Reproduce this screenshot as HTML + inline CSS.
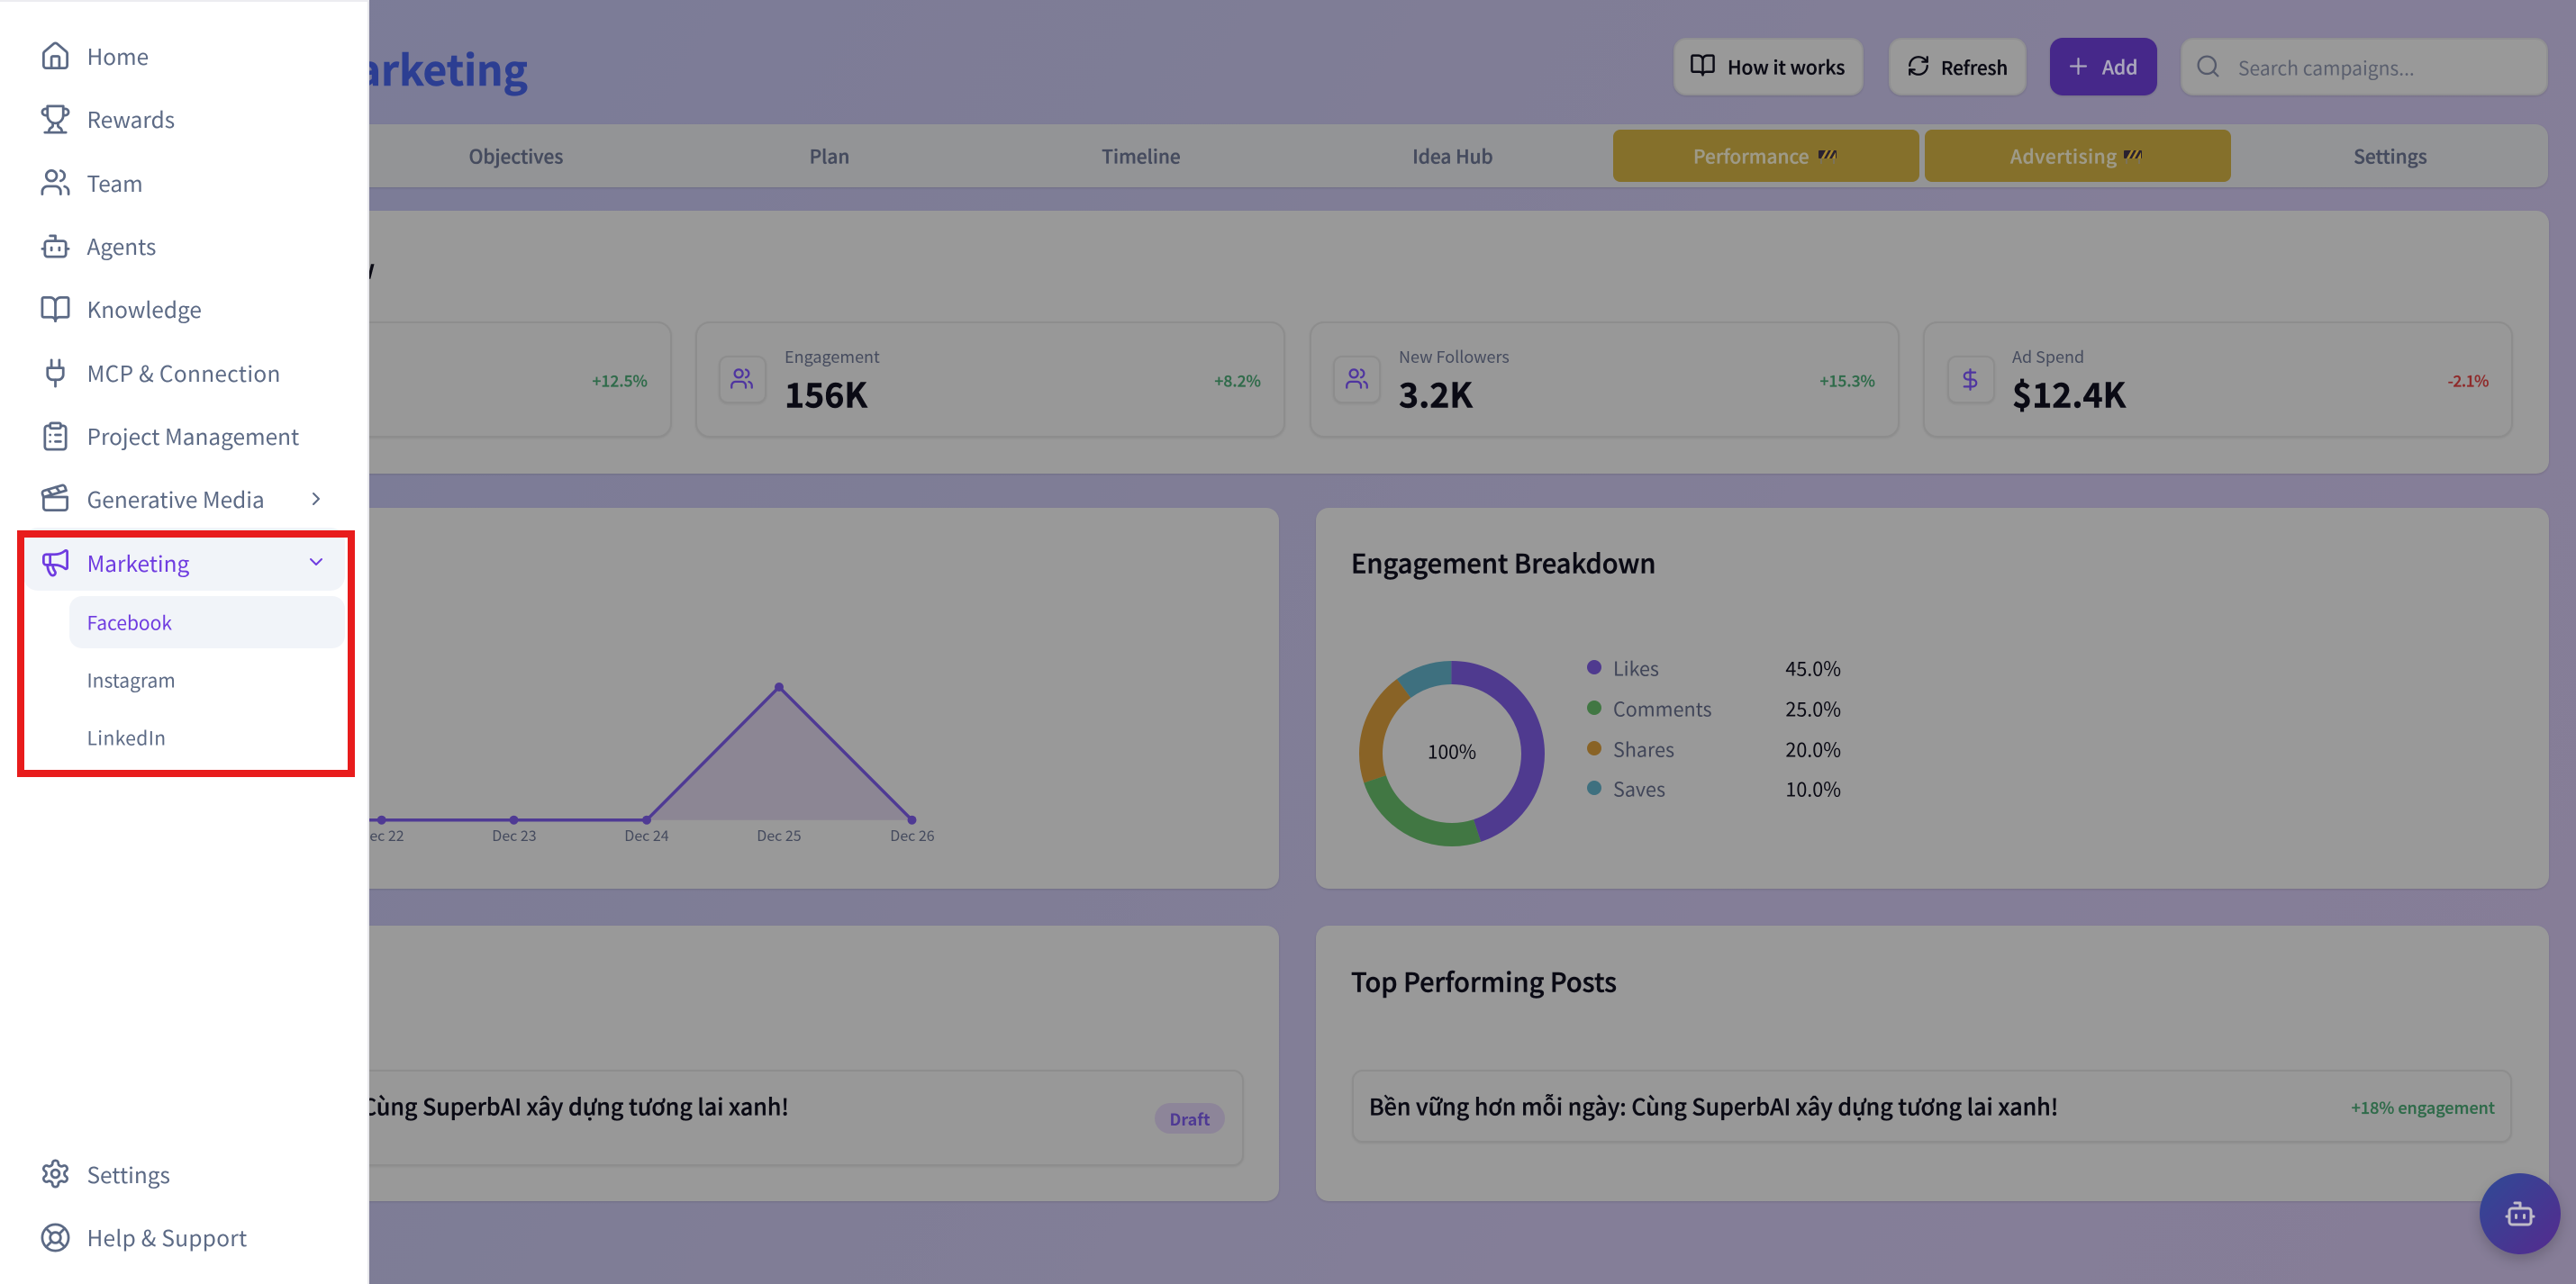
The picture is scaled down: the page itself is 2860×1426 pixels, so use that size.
<!DOCTYPE html>
<html><head><meta charset="utf-8"><style>
*{box-sizing:border-box;margin:0;padding:0}
html,body{width:2860px;height:1426px;overflow:hidden;background:#807d96}
body{position:relative;font-family:"Noto Sans CJK JP","Liberation Sans",sans-serif}
.bg{position:absolute;inset:0;background:linear-gradient(120deg,#7a7b98 0%,#7f7d96 40%,#847e98 70%,#867d97 100%)}
.b{position:absolute;background:#999;border-radius:14px;box-shadow:0 1px 2px rgba(0,0,0,.12)}
.s{position:absolute;background:#989898;border:2px solid #8d8d8d;border-radius:16px;box-shadow:0 1px 2px rgba(0,0,0,.08)}
.t{position:absolute;white-space:nowrap;line-height:1;transform:translateY(-50%)}
.c{transform:translate(-50%,-50%)}
.n{font-size:24.4px;color:#5c6a85;left:96.500px;margin-top:-.5px}
.sub{font-size:21px}
.tab{font-size:20.900px;font-weight:500;color:#454b5e;-webkit-text-stroke:.35px currentColor}
.l{font-size:18px;color:#454b5e;margin-top:-1px}
.v{font-size:37.500px;font-weight:700;color:#0a0a14;left:871px;margin-top:-1px;-webkit-text-stroke:.4px currentColor}
.g{font-size:17.500px;font-weight:500;color:#2f6b4a;-webkit-text-stroke:.25px currentColor}
.x{font-size:16px;color:#454b5e;margin-top:-1.500px}
.lg{font-size:21.500px;color:#404558;left:1791px}
.lv{font-size:21.500px;color:#0a0a14;right:816px}
.d{position:absolute;width:16px;height:16px;border-radius:50%;left:1762px}
.btn{font-size:21px;font-weight:500;-webkit-text-stroke:.3px currentColor}
.h{font-size:29px;font-weight:500;color:#0a0a14;left:1500px;-webkit-text-stroke:.4px currentColor}
.r{font-size:25px;font-weight:500;color:#0a0a14;-webkit-text-stroke:.3px currentColor}
svg{position:absolute;fill:none;stroke-linecap:round;stroke-linejoin:round}
.i{width:35px;height:35px;left:43.5px;stroke:#5c6a85;stroke-width:1.9;margin-top:-1px}
</style></head><body>
<div class="bg"></div>

<div class="t" style="right:2274px;top:76px;font-size:46px;font-weight:700;color:#2c3e92;-webkit-text-stroke:.5px currentColor">Marketing</div>

<div class="b" style="left:1858px;top:42px;width:211px;height:64px;border:2px solid #909092"></div>
<svg viewBox="0 0 24 24" style="left:1876px;top:58px;width:29px;height:29px;stroke:#0a0a14;stroke-width:2"><path d="M12 7v14"/><path d="M3 18a1 1 0 0 1-1-1V4a1 1 0 0 1 1-1h5a4 4 0 0 1 4 4 4 4 0 0 1 4-4h5a1 1 0 0 1 1 1v13a1 1 0 0 1-1 1h-6a3 3 0 0 0-3 3 3 3 0 0 0-3-3z"/></svg>
<div class="t btn" style="left:1918px;top:75px;color:#0a0a14">How it works</div>
<div class="b" style="left:2097px;top:42px;width:153px;height:64px;border:2px solid #909092"></div>
<svg viewBox="0 0 24 24" style="left:2117px;top:60px;width:26px;height:26px;stroke:#0a0a14;stroke-width:2.100"><path d="M3 12a9 9 0 0 1 9-9 9.750 9.750 0 0 1 6.740 2.740L21 8"/><path d="M21 3v5h-5"/><path d="M21 12a9 9 0 0 1-9 9 9.750 9.750 0 0 1-6.740-2.740L3 16"/><path d="M8 16H3v5"/></svg>
<div class="t btn" style="left:2155px;top:74px;font-size:20.500px;color:#0a0a14">Refresh</div>
<div class="b" style="left:2276px;top:42px;width:119px;height:64px;background:#46288a"></div>
<svg viewBox="0 0 24 24" style="left:2293px;top:59px;width:29px;height:29px;stroke:#aaa6bc;stroke-width:1.800"><path d="M5 12h14"/><path d="M12 5v14"/></svg>
<div class="t btn" style="left:2334px;top:75px;color:#aaa6bc">Add</div>
<div class="b" style="left:2421px;top:42px;width:408px;height:64px;border:2px solid #909092"></div>
<svg viewBox="0 0 24 24" style="left:2437px;top:59px;width:29px;height:29px;stroke:#555a6b;stroke-width:1.900"><circle cx="11" cy="11" r="8"/><path d="m21 21-4.300-4.300"/></svg>
<div class="t" style="left:2485px;top:76px;font-size:21px;color:#5a5f6e">Search campaigns...</div>

<div class="b" style="left:300px;top:138px;width:2529px;height:70px;background:#939496"></div>
<div class="t c tab" style="left:573px;top:174px">Objectives</div>
<div class="t c tab" style="left:921px;top:174px">Plan</div>
<div class="t c tab" style="left:1267px;top:174px">Timeline</div>
<div class="t c tab" style="left:1613px;top:174px">Idea Hub</div>
<div style="position:absolute;left:1791px;top:144px;width:340px;height:58px;background:#85702b;border-radius:8px"></div>
<div style="position:absolute;left:2137px;top:144px;width:340px;height:58px;background:#85702b;border-radius:8px"></div>
<div class="t tab" style="left:1880px;top:174px;color:#9e9a88">Performance</div>
<svg viewBox="0 0 20 16" style="left:2019px;top:166px;width:20px;height:16px"><path d="M3 10v6M17 10v6" stroke="#7a7468" stroke-width="1.500"/><rect x="0" y="1" width="20" height="9" rx="1" fill="#2a2230" stroke="none"/><path d="M3 10l5-9h3l-5 9zM9 10l5-9h3l-5 9zM15 10l4-7v7z" fill="#a8892e" stroke="none"/></svg>
<div class="t tab" style="left:2232px;top:174px;color:#9e9a88;letter-spacing:.5px">Advertising</div>
<svg viewBox="0 0 20 16" style="left:2358px;top:166px;width:20px;height:16px"><path d="M3 10v6M17 10v6" stroke="#7a7468" stroke-width="1.500"/><rect x="0" y="1" width="20" height="9" rx="1" fill="#2a2230" stroke="none"/><path d="M3 10l5-9h3l-5 9zM9 10l5-9h3l-5 9zM15 10l4-7v7z" fill="#a8892e" stroke="none"/></svg>
<div class="t c tab" style="left:2654px;top:174px">Settings</div>

<div class="b" style="left:300px;top:234px;width:2530px;height:292px"></div>
<div class="t" style="right:2444px;top:298px;font-size:29px;font-weight:500;color:#0a0a14;-webkit-text-stroke:.4px currentColor">Overview</div>
<div class="s" style="left:300px;top:357px;width:446px;height:129px"></div>
<div class="t g" style="right:2141px;top:423px">+12.5%</div>
<div class="s" style="left:772px;top:357px;width:655px;height:129px"></div>
<div class="s" style="left:798px;top:395px;width:53px;height:53px;border-radius:10px"></div>
<svg viewBox="0 0 24 24" style="left:810px;top:407px;width:27px;height:27px;stroke:#4f35a0;stroke-width:2"><path d="M16 21v-2a4 4 0 0 0-4-4H6a4 4 0 0 0-4 4v2"/><circle cx="9" cy="7" r="4"/><path d="M22 21v-2a4 4 0 0 0-3-3.870"/><path d="M16 3.130a4 4 0 0 1 0 7.750"/></svg>
<div class="t l" style="left:871px;top:397px">Engagement</div>
<div class="t v" style="top:437px">156K</div>
<div class="t g" style="right:1460px;top:423px">+8.2%</div>
<div class="s" style="left:1454px;top:357px;width:655px;height:129px"></div>
<div class="s" style="left:1480px;top:395px;width:53px;height:53px;border-radius:10px"></div>
<svg viewBox="0 0 24 24" style="left:1493px;top:407px;width:27px;height:27px;stroke:#4f35a0;stroke-width:2"><path d="M16 21v-2a4 4 0 0 0-4-4H6a4 4 0 0 0-4 4v2"/><circle cx="9" cy="7" r="4"/><path d="M22 21v-2a4 4 0 0 0-3-3.870"/><path d="M16 3.130a4 4 0 0 1 0 7.750"/></svg>
<div class="t l" style="left:1553px;top:397px">New Followers</div>
<div class="t v" style="left:1553px;top:437px">3.2K</div>
<div class="t g" style="right:778px;top:423px">+15.3%</div>
<div class="s" style="left:2135px;top:357px;width:655px;height:129px"></div>
<div class="s" style="left:2162px;top:395px;width:53px;height:53px;border-radius:10px"></div>
<svg viewBox="0 0 24 24" style="left:2174px;top:408px;width:27px;height:27px;stroke:#4f35a0;stroke-width:2"><path d="M12 2v20"/><path d="M17 5H9.500a3.500 3.500 0 0 0 0 7h5a3.500 3.500 0 0 1 0 7H6"/></svg>
<div class="t l" style="left:2234px;top:397px">Ad Spend</div>
<div class="t v" style="left:2234px;top:437px">$12.4K</div>
<div class="t g" style="right:97px;top:423px;color:#8f2a2a;letter-spacing:-.5px">-2.1%</div>

<div class="b" style="left:300px;top:564px;width:1120px;height:423px"></div>
<svg viewBox="0 0 1120 423" style="left:300px;top:564px;width:1120px;height:423px">
<path d="M418 346.700L565 199L712.500 346.700Z" fill="#8c8694" stroke="none"/>
<path d="M0 346.700H418L565 199L712.500 346.700" stroke="#4f3a94" stroke-width="3.500"/>
<g fill="#4f3a94" stroke="none"><circle cx="123.700" cy="346.700" r="5"/><circle cx="270.500" cy="346.700" r="5"/><circle cx="418" cy="346.700" r="5"/><circle cx="565" cy="199" r="5"/><circle cx="712.500" cy="346.700" r="5"/></g>
</svg>
<div class="t c x" style="left:424px;top:928px">Dec 22</div>
<div class="t c x" style="left:571px;top:928px">Dec 23</div>
<div class="t c x" style="left:718px;top:928px">Dec 24</div>
<div class="t c x" style="left:865px;top:928px">Dec 25</div>
<div class="t c x" style="left:1013px;top:928px">Dec 26</div>

<div class="b" style="left:1461px;top:564px;width:1369px;height:423px"></div>
<div class="t h" style="top:625px">Engagement Breakdown</div>
<svg viewBox="0 0 206 206" style="left:1509px;top:734px;width:206px;height:206px;transform:rotate(-90deg)">
<g stroke-width="26" stroke-linecap="butt">
<circle cx="103" cy="103" r="90" stroke="#4f3a8f" pathLength="100" stroke-dasharray="45 55" stroke-dashoffset="0"/>
<circle cx="103" cy="103" r="90" stroke="#417743" pathLength="100" stroke-dasharray="25 75" stroke-dashoffset="-45"/>
<circle cx="103" cy="103" r="90" stroke="#896326" pathLength="100" stroke-dasharray="20 80" stroke-dashoffset="-70"/>
<circle cx="103" cy="103" r="90" stroke="#3e707f" pathLength="100" stroke-dasharray="10 90" stroke-dashoffset="-90"/>
</g></svg>
<div class="t c" style="left:1612px;top:835px;font-size:21px;color:#0a0a14">100%</div>
<div class="d" style="top:733px;background:#4f3a8f"></div><div class="t lg" style="top:742px">Likes</div><div class="t lv" style="top:742px">45.0%</div>
<div class="d" style="top:778px;background:#417743"></div><div class="t lg" style="top:787px">Comments</div><div class="t lv" style="top:787px">25.0%</div>
<div class="d" style="top:823px;background:#896326"></div><div class="t lg" style="top:832px">Shares</div><div class="t lv" style="top:832px">20.0%</div>
<div class="d" style="top:867px;background:#3e707f"></div><div class="t lg" style="top:876px">Saves</div><div class="t lv" style="top:876px">10.0%</div>

<div class="b" style="left:300px;top:1028px;width:1120px;height:306px"></div>
<div class="s" style="left:300px;top:1188px;width:1081px;height:107px;border-radius:12px"></div>
<div class="t r" style="right:1984px;top:1229px">Bền vững hơn mỗi ngày: Cùng SuperbAI xây dựng tương lai xanh!</div>
<div style="position:absolute;left:1282px;top:1225px;width:78px;height:34px;background:#8d8599;border-radius:17px"></div>
<div class="t c" style="left:1321px;top:1243px;font-size:18px;font-weight:700;color:#4f3a94">Draft</div>

<div class="b" style="left:1461px;top:1028px;width:1369px;height:306px"></div>
<div class="t h" style="top:1090px">Top Performing Posts</div>
<div class="s" style="left:1501px;top:1188px;width:1288px;height:81px;border-radius:12px"></div>
<div class="t r" style="left:1520px;top:1229px">Bền vững hơn mỗi ngày: Cùng SuperbAI xây dựng tương lai xanh!</div>
<div class="t g" style="right:90px;top:1230px;font-size:18px">+18% engagement</div>

<div style="position:absolute;left:2753px;top:1303px;width:90px;height:90px;border-radius:50%;background:linear-gradient(135deg,#2f4a96,#552a8e);box-shadow:0 6px 14px rgba(0,0,0,.18)"></div>
<svg viewBox="0 0 24 24" style="left:2780px;top:1330px;width:36px;height:36px;stroke:#c0bcc8;stroke-width:2"><path d="M12 8V4H8"/><rect width="16" height="12" x="4" y="8" rx="2"/><path d="M2 14h2"/><path d="M20 14h2"/><path d="M15 13v2"/><path d="M9 13v2"/></svg>

<div style="position:absolute;left:0;top:0;width:410px;height:1426px;background:#fff;border-right:2px solid #e8e8ec;border-top:2px solid #ececf0"></div>
<svg class="i" viewBox="0 0 24 24" style="top:46px"><path d="M15 21v-8a1 1 0 0 0-1-1h-4a1 1 0 0 0-1 1v8"/><path d="M3 10a2 2 0 0 1 .709-1.528l7-5.999a2 2 0 0 1 2.582 0l7 5.999A2 2 0 0 1 21 10v9a2 2 0 0 1-2 2H5a2 2 0 0 1-2-2z"/></svg>
<div class="t n" style="top:63px">Home</div>
<svg class="i" viewBox="0 0 24 24" style="top:116px"><path d="M6 9H4.500a2.500 2.500 0 0 1 0-5H6"/><path d="M18 9h1.500a2.500 2.500 0 0 0 0-5H18"/><path d="M4 22h16"/><path d="M10 14.660V17c0 .55-.47.98-.97 1.210C7.850 18.750 7 20.240 7 22"/><path d="M14 14.660V17c0 .55.47.98.97 1.210C16.150 18.750 17 20.240 17 22"/><path d="M18 2H6v7a6 6 0 0 0 12 0V2Z"/></svg>
<div class="t n" style="top:133px">Rewards</div>
<svg class="i" viewBox="0 0 24 24" style="top:186px"><path d="M16 21v-2a4 4 0 0 0-4-4H6a4 4 0 0 0-4 4v2"/><circle cx="9" cy="7" r="4"/><path d="M22 21v-2a4 4 0 0 0-3-3.870"/><path d="M16 3.130a4 4 0 0 1 0 7.750"/></svg>
<div class="t n" style="top:204px">Team</div>
<svg class="i" viewBox="0 0 24 24" style="top:257px"><path d="M12 8V4H8"/><rect width="16" height="12" x="4" y="8" rx="2"/><path d="M2 14h2"/><path d="M20 14h2"/><path d="M15 13v2"/><path d="M9 13v2"/></svg>
<div class="t n" style="top:274px">Agents</div>
<svg class="i" viewBox="0 0 24 24" style="top:327px"><path d="M12 7v14"/><path d="M3 18a1 1 0 0 1-1-1V4a1 1 0 0 1 1-1h5a4 4 0 0 1 4 4 4 4 0 0 1 4-4h5a1 1 0 0 1 1 1v13a1 1 0 0 1-1 1h-6a3 3 0 0 0-3 3 3 3 0 0 0-3-3z"/></svg>
<div class="t n" style="top:344px">Knowledge</div>
<svg class="i" viewBox="0 0 24 24" style="top:398px"><path d="M12 22v-5"/><path d="M9 8V2"/><path d="M15 8V2"/><path d="M18 8v5a4 4 0 0 1-4 4h-4a4 4 0 0 1-4-4V8Z"/></svg>
<div class="t n" style="top:415px;letter-spacing:.35px">MCP &amp; Connection</div>
<svg class="i" viewBox="0 0 24 24" style="top:468px"><rect width="8" height="4" x="8" y="2" rx="1" ry="1"/><path d="M16 4h2a2 2 0 0 1 2 2v14a2 2 0 0 1-2 2H6a2 2 0 0 1-2-2V6a2 2 0 0 1 2-2h2"/><path d="M12 11h4"/><path d="M12 16h4"/><path d="M8 11h.01"/><path d="M8 16h.01"/></svg>
<div class="t n" style="top:485px">Project Management</div>
<svg class="i" viewBox="0 0 24 24" style="top:537px"><path d="M20.200 6 3 11l-.9-2.400c-.3-1.100.3-2.200 1.300-2.500l13.500-4c1.100-.3 2.200.3 2.500 1.300Z"/><path d="m6.200 5.300 3.100 3.900"/><path d="m12.400 3.400 3.100 4"/><path d="M3 11h18v8a2 2 0 0 1-2 2H5a2 2 0 0 1-2-2Z"/></svg>
<div class="t n" style="top:555px">Generative Media</div>
<svg viewBox="0 0 24 24" style="left:339px;top:542px;width:24px;height:24px;stroke:#5c6a85;stroke-width:2"><path d="m9 18 6-6-6-6"/></svg>

<div style="position:absolute;left:26px;top:586px;width:357px;height:70px;background:#f1f4f9;border-radius:16px"></div>
<svg class="i" viewBox="0 0 24 24" style="top:608px;stroke:#6f3ce0"><path d="M11 6a13 13 0 0 0 8.400-2.800A1 1 0 0 1 21 4v12a1 1 0 0 1-1.600.8A13 13 0 0 0 11 14H5a2 2 0 0 1-2-2V8a2 2 0 0 1 2-2z"/><path d="M6 14a12 12 0 0 0 2.400 7.200 2 2 0 0 0 3.200-2.400A8 8 0 0 1 10 14"/><path d="M8 6v8"/></svg>
<div class="t n" style="top:626px;color:#6f3ce0">Marketing</div>
<svg viewBox="0 0 24 24" style="left:338.500px;top:611.500px;width:24px;height:24px;stroke:#6f3ce0;stroke-width:2"><path d="m6 9 6 6 6-6"/></svg>
<div style="position:absolute;left:77px;top:662px;width:306px;height:58px;background:#f1f4f9;border-radius:14px"></div>
<div class="t n sub" style="top:692px;color:#6f3ce0">Facebook</div>
<div class="t n sub" style="top:756px">Instagram</div>
<div class="t n sub" style="top:820px;letter-spacing:.4px">LinkedIn</div>
<div style="position:absolute;left:19px;top:589px;width:375px;height:274px;border:8px solid #e81c1c"></div>

<svg class="i" viewBox="0 0 24 24" style="top:1287px"><path d="M12.220 2h-.44a2 2 0 0 0-2 2v.18a2 2 0 0 1-1 1.730l-.43.25a2 2 0 0 1-2 0l-.15-.08a2 2 0 0 0-2.730.73l-.22.38a2 2 0 0 0 .73 2.730l.15.1a2 2 0 0 1 1 1.720v.51a2 2 0 0 1-1 1.740l-.15.09a2 2 0 0 0-.73 2.730l.22.38a2 2 0 0 0 2.730.73l.15-.08a2 2 0 0 1 2 0l.43.25a2 2 0 0 1 1 1.730V20a2 2 0 0 0 2 2h.44a2 2 0 0 0 2-2v-.18a2 2 0 0 1 1-1.730l.43-.25a2 2 0 0 1 2 0l.15.08a2 2 0 0 0 2.730-.73l.22-.39a2 2 0 0 0-.73-2.730l-.15-.08a2 2 0 0 1-1-1.740v-.5a2 2 0 0 1 1-1.740l.15-.09a2 2 0 0 0 .73-2.730l-.22-.38a2 2 0 0 0-2.730-.73l-.15.08a2 2 0 0 1-2 0l-.43-.25a2 2 0 0 1-1-1.730V4a2 2 0 0 0-2-2z"/><circle cx="12" cy="12" r="3"/></svg>
<div class="t n" style="top:1305px">Settings</div>
<svg class="i" viewBox="0 0 24 24" style="top:1358px"><circle cx="12" cy="12" r="10"/><path d="m4.930 4.930 4.240 4.240"/><path d="m14.830 9.170 4.240-4.240"/><path d="m14.830 14.830 4.240 4.240"/><path d="m9.170 14.830-4.240 4.240"/><circle cx="12" cy="12" r="4"/></svg>
<div class="t n" style="top:1375px;letter-spacing:.3px">Help &amp; Support</div>
</body></html>
